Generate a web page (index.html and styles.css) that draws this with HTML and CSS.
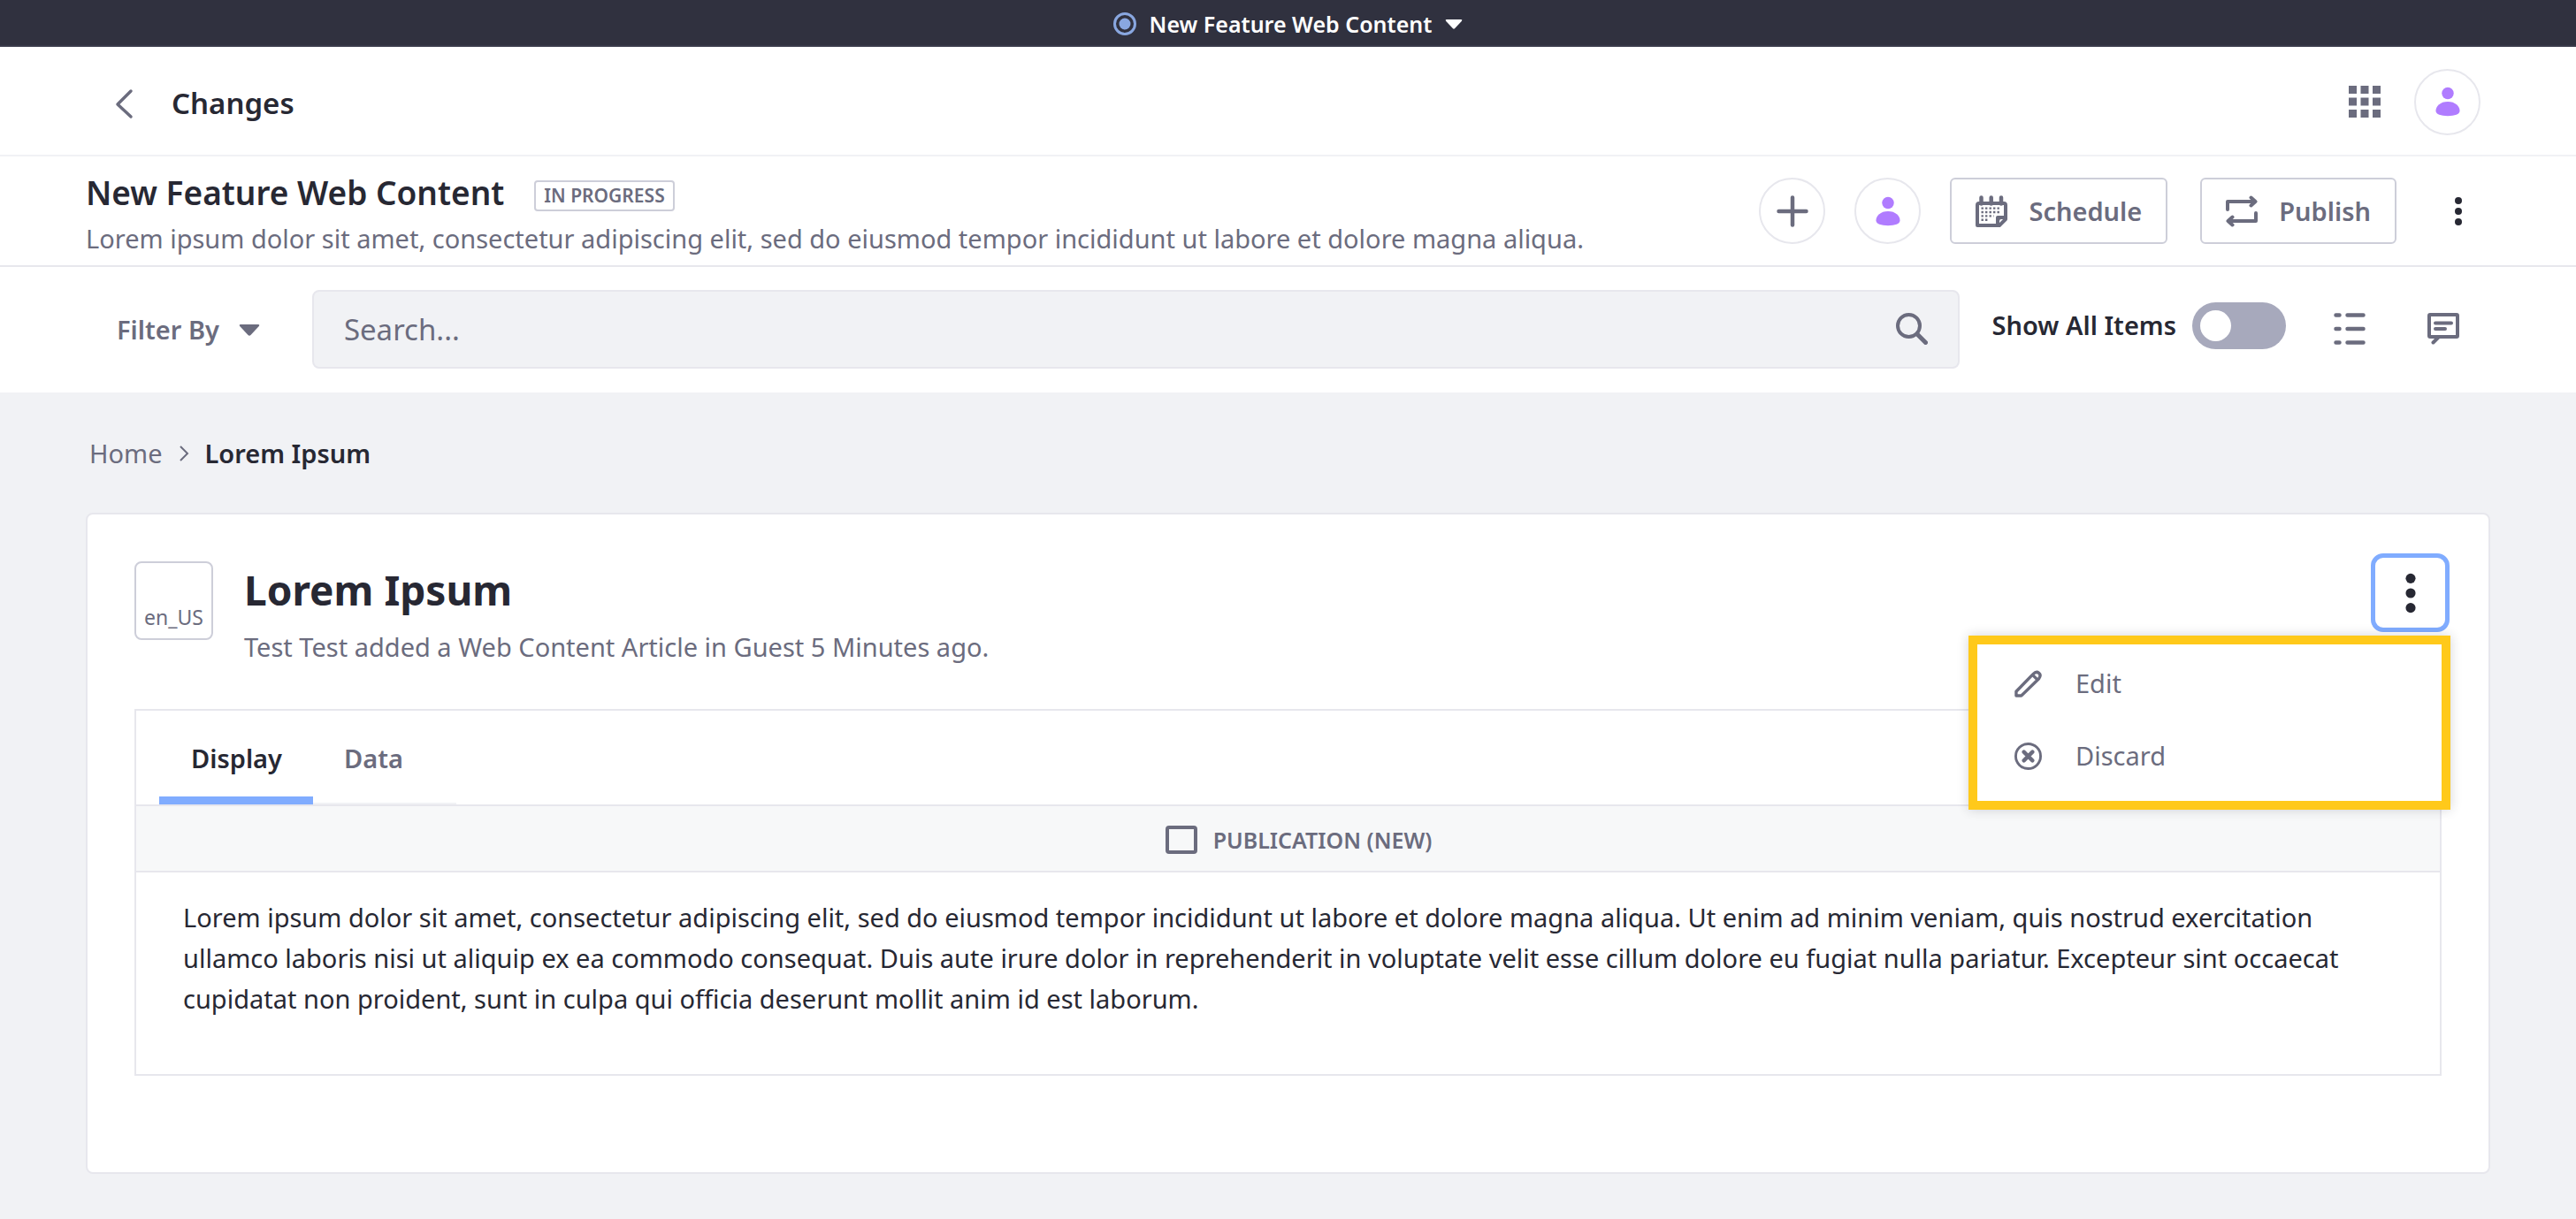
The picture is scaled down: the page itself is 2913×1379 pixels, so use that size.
FILE: index.html
```html
<!DOCTYPE html>
<html lang="en">
<head>
<meta charset="utf-8">
<title>Changes - New Feature Web Content</title>
<link rel="stylesheet" href="styles.css">
</head>
<body>
<svg class="sprite" aria-hidden="true">
  <symbol id="user" viewBox="0 0 512 512">
    <circle cx="256" cy="122" r="96"/>
    <path d="M256 256c-120 0-192 72-192 146 0 58 80 84 192 84s192-26 192-84c0-74-72-146-192-146z"/>
  </symbol>
  <symbol id="dots" viewBox="0 0 36 36">
    <circle cx="18" cy="6" r="4"/><circle cx="18" cy="18" r="4"/><circle cx="18" cy="30" r="4"/>
  </symbol>
  <symbol id="caret" viewBox="0 0 36 36">
    <path d="M8 12h20q2 0 .8 2L19.500 24q-1.500 1.500-3 0L7.200 14q-1.200-2 .8-2z"/>
  </symbol>
</svg>

<div class="publication-bar">
  <button class="publication-switch" type="button">
    <svg class="radio-icon" viewBox="0 0 26 26"><circle cx="13" cy="13" r="11.500" fill="none" stroke="currentColor" stroke-width="3"/><circle cx="13" cy="13" r="6.500" fill="currentColor"/></svg>
    <span>New Feature Web Content</span>
    <svg class="caret-small" viewBox="6 10 24 16"><use href="#caret" width="36" height="36"/></svg>
  </button>
</div>

<header class="control-menu">
  <a class="back" href="#" aria-label="Back"><svg viewBox="0 0 36 36"><path d="M26 4L11 19l15 14" fill="none" stroke="currentColor" stroke-width="3.500" stroke-linecap="round" stroke-linejoin="round"/></svg></a>
  <h1 class="page-name">Changes</h1>
  <button class="icon-button" type="button" aria-label="Applications">
    <svg viewBox="0 0 36 36"><path d="M0 0h9v9H0zM13.500 0h9v9h-9zM27 0h9v9h-9zM0 13.500h9v9H0zM13.500 13.500h9v9h-9zM27 13.500h9v9h-9zM0 27h9v9H0zM13.500 27h9v9h-9zM27 27h9v9h-9z"/></svg>
  </button>
  <button class="round" type="button" aria-label="User"><svg class="person"><use href="#user"/></svg></button>
</header>

<section class="publication">
  <div class="publication-text">
    <div class="publication-title">
      <h2>New Feature Web Content</h2>
      <span class="status">IN PROGRESS</span>
    </div>
    <p>Lorem ipsum dolor sit amet, consectetur adipiscing elit, sed do eiusmod tempor incididunt ut labore et dolore magna aliqua.</p>
  </div>
  <div class="publication-actions">
    <button class="round" type="button" aria-label="Add"><svg viewBox="0 0 36 36"><path d="M18 2.500v31M2.500 18h31" stroke="currentColor" stroke-width="4.500" stroke-linecap="round"/></svg></button>
    <button class="round" type="button" aria-label="Collaborator"><svg class="person"><use href="#user"/></svg></button>
    <button class="outlined" type="button">
      <svg viewBox="0 0 36 36">
        <path d="M2 34V11q0-2 2-2h28q2 0 2 2v16l-7 7H4q-2 0-2-2z" fill="none" stroke="currentColor" stroke-width="4" stroke-linejoin="round"/>
        <path d="M6.500 2.500v7M17.700 2.500v7M29 2.500v7" stroke="currentColor" stroke-width="4.500" stroke-linecap="round"/>
        <path d="M23 35V25q0-2 2-2h10v4h-6q-2 0-2 2v6z"/>
        <path d="M6.500 14.600h21M6.500 19h21M6.500 23.400h14M6.500 27.800h9" fill="none" stroke="currentColor" stroke-width="2.400" stroke-dasharray="2.400 2.100"/>
      </svg>
      <span>Schedule</span>
    </button>
    <button class="outlined" type="button">
      <svg viewBox="0 0 36 36" fill="none" stroke="currentColor" stroke-width="4" stroke-linecap="round" stroke-linejoin="round"><path d="M2 16V7h31M28.500 2.500L33.500 7l-5 4.500M34 20v9H3M7.500 24.500L2.500 29l5 4.500"/></svg>
      <span>Publish</span>
    </button>
    <button class="icon-button dark" type="button" aria-label="More actions"><svg><use href="#dots"/></svg></button>
  </div>
</section>

<nav class="toolbar">
  <button class="filter" type="button"><span>Filter By</span><svg class="caret-large" viewBox="6 10 24 16"><use href="#caret" width="36" height="36"/></svg></button>
  <form class="search" role="search">
    <input type="text" placeholder="Search..." aria-label="Search">
    <button class="icon-button" type="button" aria-label="Submit search"><svg viewBox="0 0 36 36" fill="none" stroke="currentColor" stroke-width="4"><circle cx="14.500" cy="14.500" r="12.500"/><path d="M24 24l9.500 9.500" stroke-width="5" stroke-linecap="round"/></svg></button>
  </form>
  <label class="toggle"><span>Show All Items</span><input type="checkbox" role="switch"></label>
  <button class="icon-button" type="button" aria-label="List view"><svg viewBox="0 0 36 36" stroke="currentColor" stroke-width="4.500" stroke-linecap="round"><path d="M2.500 2.500h4M15.500 2.500h18M2.500 18h4M15.500 18h18M2.500 33.500h4M15.500 33.500h18"/></svg></button>
  <button class="icon-button comments" type="button" aria-label="Comments"><svg viewBox="0 0 36 36" fill="none" stroke="currentColor" stroke-width="4" stroke-linecap="round" stroke-linejoin="round"><path d="M3 2h30q1 0 1 1v23q0 1-1 1H3q-1 0-1-1V3q0-1 1-1zM12 28l-5.500 5.500M9 11.500h18M9 18h11"/></svg></button>
</nav>

<main class="content">
  <nav class="breadcrumb" aria-label="Breadcrumb">
    <a href="#">Home</a>
    <svg viewBox="0 0 14 20"><path d="M3 2l8 8-8 8" fill="none" stroke="currentColor" stroke-width="2"/></svg>
    <span aria-current="page">Lorem Ipsum</span>
  </nav>

  <article class="card">
    <header class="card-header">
      <span class="locale">en_US</span>
      <div class="card-title">
        <h3>Lorem Ipsum</h3>
        <p>Test Test added a Web Content Article in Guest 5 Minutes ago.</p>
      </div>
      <div class="actions">
        <button class="kebab" type="button" aria-label="Actions" aria-expanded="true"><svg><use href="#dots"/></svg></button>
        <div class="menu">
          <a href="#"><svg viewBox="0 0 32 32" fill="none" stroke="currentColor" stroke-width="3.500" stroke-linejoin="round"><path d="M2 30v-5L22 4.500q3.500-3.500 6.500-1t0 6.500L8 30zM21 5.500l5.500 5.500"/></svg><span>Edit</span></a>
          <a href="#"><svg viewBox="0 0 32 32" fill="none" stroke="currentColor" stroke-width="3" stroke-linecap="round"><circle cx="16" cy="16" r="14.500"/><path d="M11 11l10 10M21 11l-10 10" stroke-width="4.500"/></svg><span>Discard</span></a>
        </div>
      </div>
    </header>

    <section class="panel">
      <div class="tabs" role="tablist">
        <button class="tab active" role="tab" aria-selected="true" type="button">Display</button>
        <button class="tab" role="tab" aria-selected="false" type="button">Data</button>
      </div>
      <div class="panel-heading">
        <svg viewBox="0 0 36 32"><rect x="2" y="2" width="32" height="28" rx="2" fill="none" stroke="currentColor" stroke-width="4"/></svg>
        <span>PUBLICATION (NEW)</span>
      </div>
      <p class="panel-body">Lorem ipsum dolor sit amet, consectetur adipiscing elit, sed do eiusmod tempor incididunt ut labore et dolore magna aliqua. Ut enim ad minim veniam, quis nostrud exercitation ullamco laboris nisi ut aliquip ex ea commodo consequat. Duis aute irure dolor in reprehenderit in voluptate velit esse cillum dolore eu fugiat nulla pariatur. Excepteur sint occaecat cupidatat non proident, sunt in culpa qui officia deserunt mollit anim id est laborum.</p>
    </section>
  </article>
</main>
</body>
</html>
```

FILE: styles.css
```css
:root {
  --dark: #272833;
  --gray: #6b6c7e;
  --line: #e7e7ed;
  --outline: #cdced9;
  --surface: #f1f2f5;
  --focus: #80acff;
}

* {
  box-sizing: border-box;
}

body {
  margin: 0;
  min-height: 100vh;
  background: var(--surface);
  color: var(--dark);
  font: 29px/46px "Segoe UI", "Noto Sans", "Open Sans", sans-serif;
}

h1, h2, h3, p {
  margin: 0;
}

h1, h2 {
  font-weight: 600;
}

button, input {
  margin: 0;
  font: inherit;
  color: inherit;
}

button {
  display: flex;
  align-items: center;
  justify-content: center;
  padding: 0;
  border: 0;
  background: none;
  flex: none;
}

a {
  color: inherit;
  text-decoration: none;
}

svg {
  display: block;
  flex: none;
  width: 36px;
  height: 36px;
  fill: currentColor;
}

svg[fill="none"] {
  fill: none;
}

.sprite {
  position: absolute;
  width: 0;
  height: 0;
}

/* Publication bar */
.publication-bar {
  display: flex;
  justify-content: center;
  height: 53px;
  background: #30313f;
  border-bottom: 2px solid #393a4a;
}

.publication-switch {
  gap: 15px;
  padding-top: 2px;
  color: #fff;
  font-size: 25px;
  font-weight: 600;
}

.radio-icon {
  width: 26px;
  height: 26px;
  color: #89a7e0;
}

.caret-small {
  width: 20px;
  height: 14px;
}

/* Control menu */
.control-menu {
  display: flex;
  align-items: center;
  height: 124px;
  padding: 2px 108px 0 122px;
  background: #fff;
  border-bottom: 2px solid var(--surface);
  color: var(--gray);
}

.back {
  padding-top: 4px;
}

.page-name {
  flex: 1;
  margin-left: 36px;
  padding-top: 4px;
  color: var(--dark);
  font-size: 33px;
}

.icon-button {
  width: 36px;
  height: 36px;
}

.dark {
  color: var(--dark);
}

.round {
  width: 75px;
  height: 75px;
  border: 2px solid var(--line);
  border-radius: 50%;
}

.person {
  width: 36px;
  height: 36px;
  color: #b07cff;
}

.control-menu .round {
  margin-left: 38px;
}

/* Publication summary */
.publication {
  display: flex;
  align-items: center;
  justify-content: space-between;
  height: 125px;
  padding: 0 115px 0 97px;
  background: #fff;
  border-bottom: 2px solid var(--line);
  color: var(--gray);
}

.publication-text {
  padding-top: 4px;
}

.publication-title {
  display: flex;
  align-items: center;
  gap: 34px;
  height: 58px;
}

.publication-title h2 {
  color: var(--dark);
  font-size: 37px;
}

.status {
  margin-top: 8px;
  padding: 0 9px;
  border: 2px solid var(--outline);
  border-radius: 4px;
  font-size: 21px;
  font-weight: 600;
  line-height: 31px;
}

.publication-actions {
  display: flex;
  align-items: center;
  gap: 33px;
}

.outlined {
  gap: 24px;
  height: 75px;
  padding: 0 27px;
  border: 2px solid var(--outline);
  border-radius: 6px;
  font-weight: 600;
}

.publication-actions .outlined + .outlined {
  margin-left: 4px;
}

.publication-actions .icon-button {
  margin-left: 19px;
}

/* Toolbar */
.toolbar {
  display: flex;
  align-items: center;
  height: 142px;
  padding: 0 132px 2px;
  background: #fff;
  color: var(--gray);
}

.filter {
  gap: 22px;
  padding-top: 2px;
  font-weight: 600;
}

.caret-large {
  width: 24px;
  height: 16px;
}

.search {
  display: flex;
  flex: 1;
  align-items: center;
  height: 89px;
  margin: 0 37px 0 59px;
  padding: 0 34px;
  background: var(--surface);
  border: 2px solid var(--line);
  border-radius: 8px;
}

.search input {
  flex: 1;
  min-width: 0;
  padding: 2px 0 0;
  border: 0;
  background: none;
  font-size: 33px;
}

.search input::placeholder {
  color: var(--gray);
  opacity: 1;
}

.toggle {
  display: flex;
  align-items: center;
  gap: 18px;
  margin-right: 54px;
  padding-bottom: 8px;
  color: var(--dark);
  font-weight: 600;
}

.toggle input {
  appearance: none;
  width: 106px;
  height: 53px;
  padding: 9px;
  border-radius: 27px;
  background: #a7a9bc;
}

.toggle input::before {
  content: "";
  display: block;
  width: 35px;
  height: 35px;
  border-radius: 50%;
  background: #fff;
}

.comments {
  margin-left: 70px;
}

/* Content */
.content {
  padding: 46px 97px 50px;
}

.breadcrumb {
  display: flex;
  align-items: center;
  gap: 17px;
  padding-left: 4px;
  color: var(--gray);
}

.breadcrumb svg {
  width: 14px;
  height: 20px;
}

.breadcrumb span {
  color: var(--dark);
  font-weight: 600;
}

.card {
  margin-top: 44px;
  padding: 44px 53px 109px;
  background: #fff;
  border: 2px solid var(--line);
  border-radius: 8px;
}

.card-header {
  display: flex;
  align-items: flex-start;
  gap: 35px;
}

.locale {
  width: 89px;
  height: 89px;
  margin-top: 9px;
  padding-top: 38px;
  border: 2px solid var(--outline);
  border-radius: 8px;
  color: var(--gray);
  font-size: 23px;
  text-align: center;
}

.card-title {
  flex: 1;
  padding-top: 5px;
  color: var(--gray);
}

.card-title h3 {
  margin-bottom: 6px;
  color: var(--dark);
  font-size: 46px;
  line-height: 72px;
}

.actions {
  position: relative;
  margin-right: -9px;
}

.kebab {
  width: 89px;
  height: 89px;
  border: 5px solid var(--focus);
  border-radius: 14px;
}

.kebab svg {
  width: 50px;
  height: 50px;
}

.menu {
  position: absolute;
  top: 93px;
  right: -1px;
  width: 545px;
  height: 197px;
  padding: 3px 42px;
  background: #fff;
  border: 10px solid #ffc91a;
  box-shadow: 0 0 12px rgba(39, 40, 51, 0.2);
  color: var(--gray);
}

.menu a {
  display: flex;
  align-items: center;
  gap: 38px;
  height: 82px;
}

.menu svg {
  width: 31px;
  height: 31px;
}

/* Comparison panel */
.panel {
  margin-top: 47px;
  border: 2px solid var(--line);
}

.tabs {
  display: flex;
  height: 108px;
  padding-left: 26px;
  border-bottom: 2px solid var(--line);
}

.tab {
  padding: 2px 60px 7px 35px;
  border-top: 9px solid transparent;
  border-bottom: 2px solid var(--surface);
  color: var(--gray);
  font-weight: 600;
}

.tab.active {
  padding: 2px 35px 0 36px;
  border-bottom: 9px solid var(--focus);
  color: var(--dark);
}

.panel-heading {
  display: flex;
  align-items: center;
  justify-content: center;
  gap: 18px;
  height: 75px;
  padding: 2px 0 0 24px;
  background: #f7f8f9;
  border-bottom: 2px solid var(--line);
  color: var(--gray);
  font-size: 25px;
  font-weight: 600;
}

.panel-heading svg {
  height: 32px;
}

.panel-body {
  padding: 28px 53px 62px;
}
```
